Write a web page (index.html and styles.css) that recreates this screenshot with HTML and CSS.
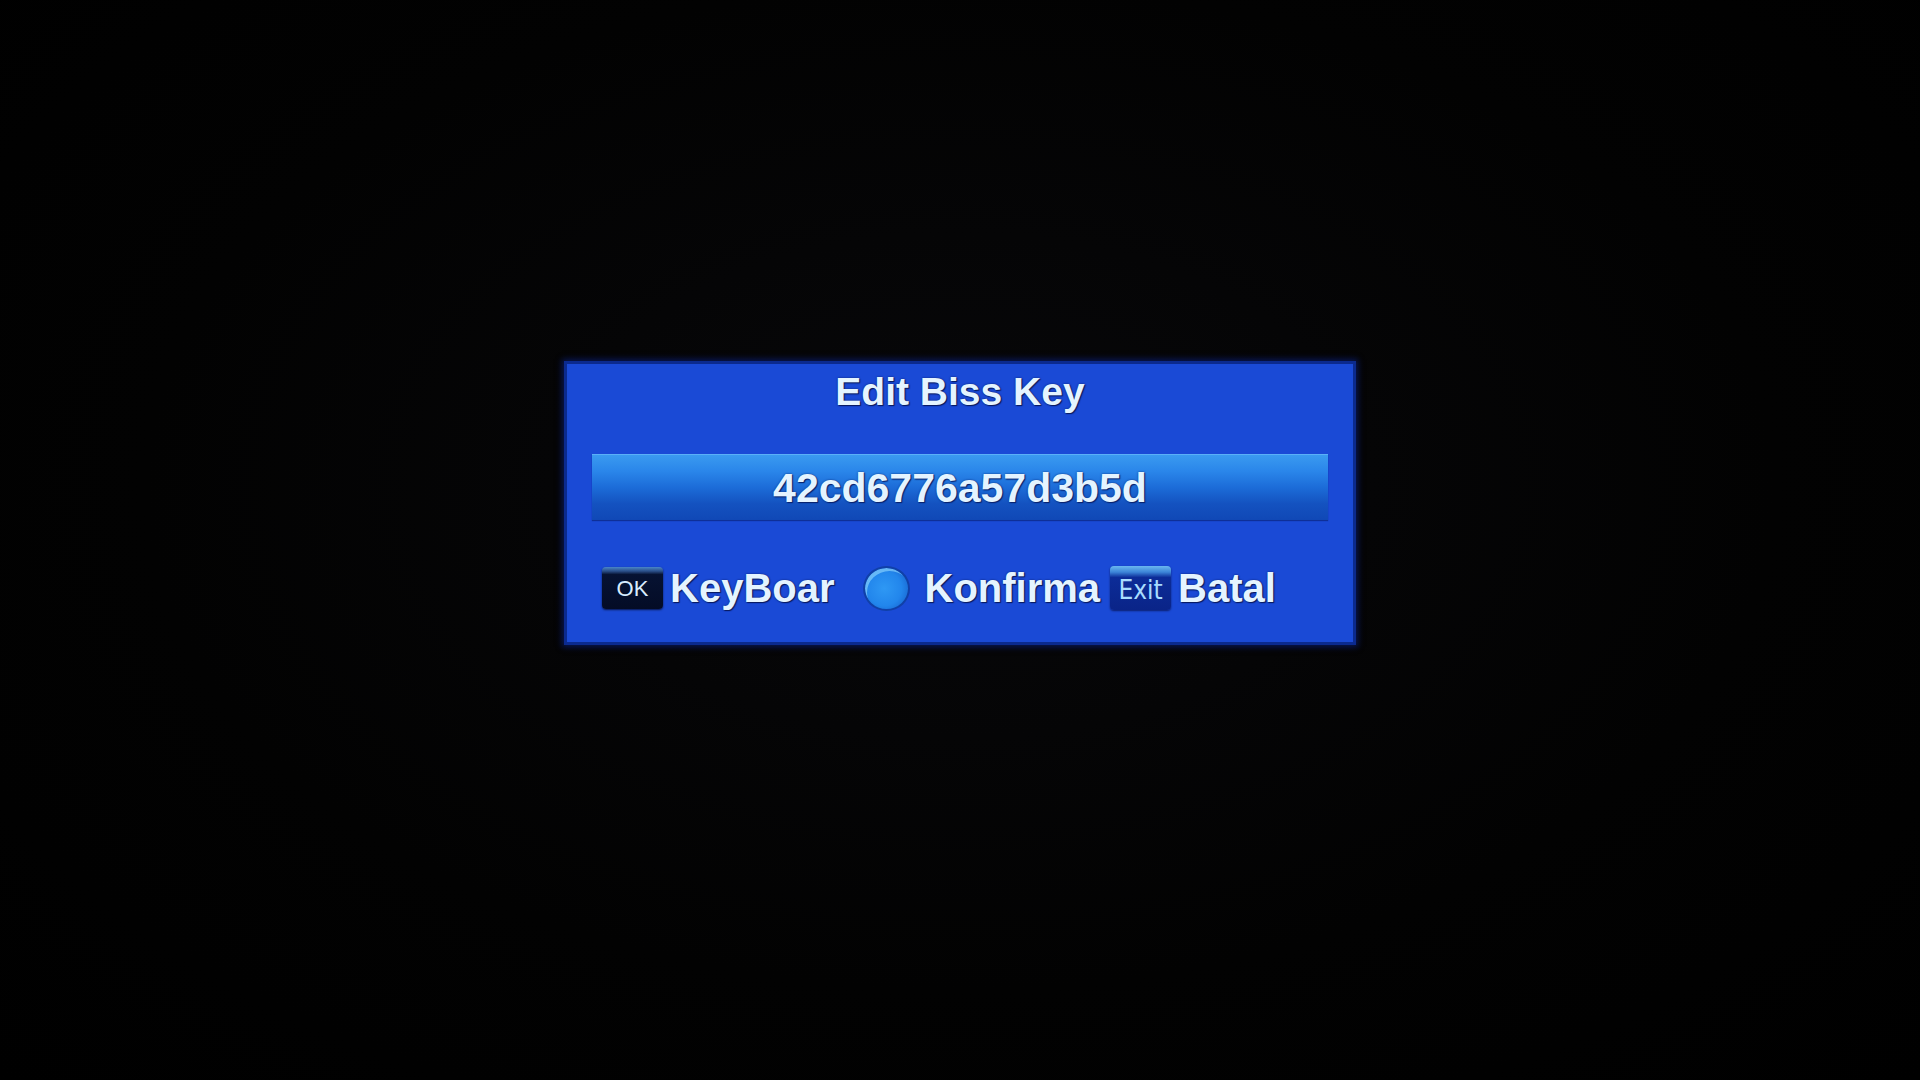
FILE: index.html
```html
<!DOCTYPE html>
<html lang="en">
<head>
  <meta charset="UTF-8" />
  <meta name="viewport" content="width=device-width, initial-scale=1.0"/>
  <title>Edit Biss Key</title>
  <link rel="stylesheet" href="styles.css">
</head>
<body>
  <div class="dialog">
    <h1 class="title">Edit Biss Key</h1>

    <div class="key-field">42cd6776a57d3b5d</div>

    <div class="hints">
      <span class="btn btn-ok">OK</span>
      <span class="hint-label">KeyBoar</span>
      <span class="dot"></span>
      <span class="hint-label">Konfirma</span>
      <span class="btn btn-exit">Exit</span>
      <span class="hint-label">Batal</span>
    </div>
  </div>
</body>
</html>
```

FILE: styles.css
```css
* {
  margin: 0;
  padding: 0;
  box-sizing: border-box;
}

body {
  width: 1920px;
  height: 1080px;
  background: radial-gradient(ellipse at 50% 45%, #08080a 0%, #020202 60%, #000 100%);
  font-family: 'Liberation Sans', Arial, sans-serif;
  color: #e4f4ff;
  display: flex;
  justify-content: center;
  align-items: flex-start;
  padding-top: 361px;
  overflow: hidden;
}

.dialog {
  width: 792px;
  height: 284px;
  background: #1a4ad6;
  border: 3px solid #0b2a8e;
  box-shadow: 0 0 6px 2px rgba(10, 30, 120, 0.7);
  padding-top: 8px;
}

.title {
  font-size: 39px;
  line-height: 39px;
  font-weight: bold;
  text-align: center;
  text-shadow: 0 0 2px #0a1d66, 1px 1px 1px #08185a;
}

.key-field {
  margin: 43px 25px 0 25px;
  height: 66px;
  line-height: 66px;
  text-align: center;
  font-size: 41px;
  font-weight: bold;
  background: linear-gradient(to bottom, #3a9af0 0%, #2a86ea 25%, #1c6cd8 50%, #1452c0 75%, #1048b6 100%);
  border-top: 1px solid #5ab0f8;
  box-shadow: 0 1px 1px rgba(6, 30, 110, 0.6);
  text-shadow: 0 0 2px #0a2a78, 1px 1px 1px #081e66;
}

.hints {
  margin-top: 45px;
  padding-left: 35px;
  height: 46px;
  display: flex;
  align-items: center;
}

.hint-label {
  font-size: 40px;
  line-height: 46px;
  font-weight: bold;
  text-shadow: 0 0 2px #0a1d66, 1px 1px 1px #08185a;
}

.btn {
  width: 61px;
  height: 42px;
  border-radius: 4px;
  display: flex;
  align-items: center;
  justify-content: center;
  margin-right: 7px;
}

.btn-ok {
  background: linear-gradient(to bottom, #4a86c8 0%, #2a4e88 10%, #061232 18%, #040c26 100%);
  box-shadow: 0 1px 2px rgba(0, 0, 20, 0.7);
  font-size: 22px;
  color: #d8ecff;
  padding-top: 2px;
}

.btn-exit {
  margin-left: 10px;
  height: 44px;
  background: linear-gradient(to bottom, #6ab8f0 0%, #3c84d8 14%, #0c2c98 26%, #0a2488 100%);
  box-shadow: 0 1px 2px rgba(0, 0, 40, 0.6);
  font-family: 'Liberation Sans Narrow', 'DejaVu Sans Condensed', sans-serif;
  font-size: 26px;
  color: #a8dcff;
  padding-top: 4px;
}

.dot {
  width: 47px;
  height: 45px;
  border-radius: 50%;
  margin: 0 15px 0 28px;
  background: radial-gradient(circle at 45% 50%, #2e98f4 0%, #2286ec 55%, #1a6cd6 80%, #1452b8 100%);
  border: 2px solid #1040a8;
  box-shadow: inset 3px 4px 0 -1px rgba(150, 220, 255, 0.6);
}
```
